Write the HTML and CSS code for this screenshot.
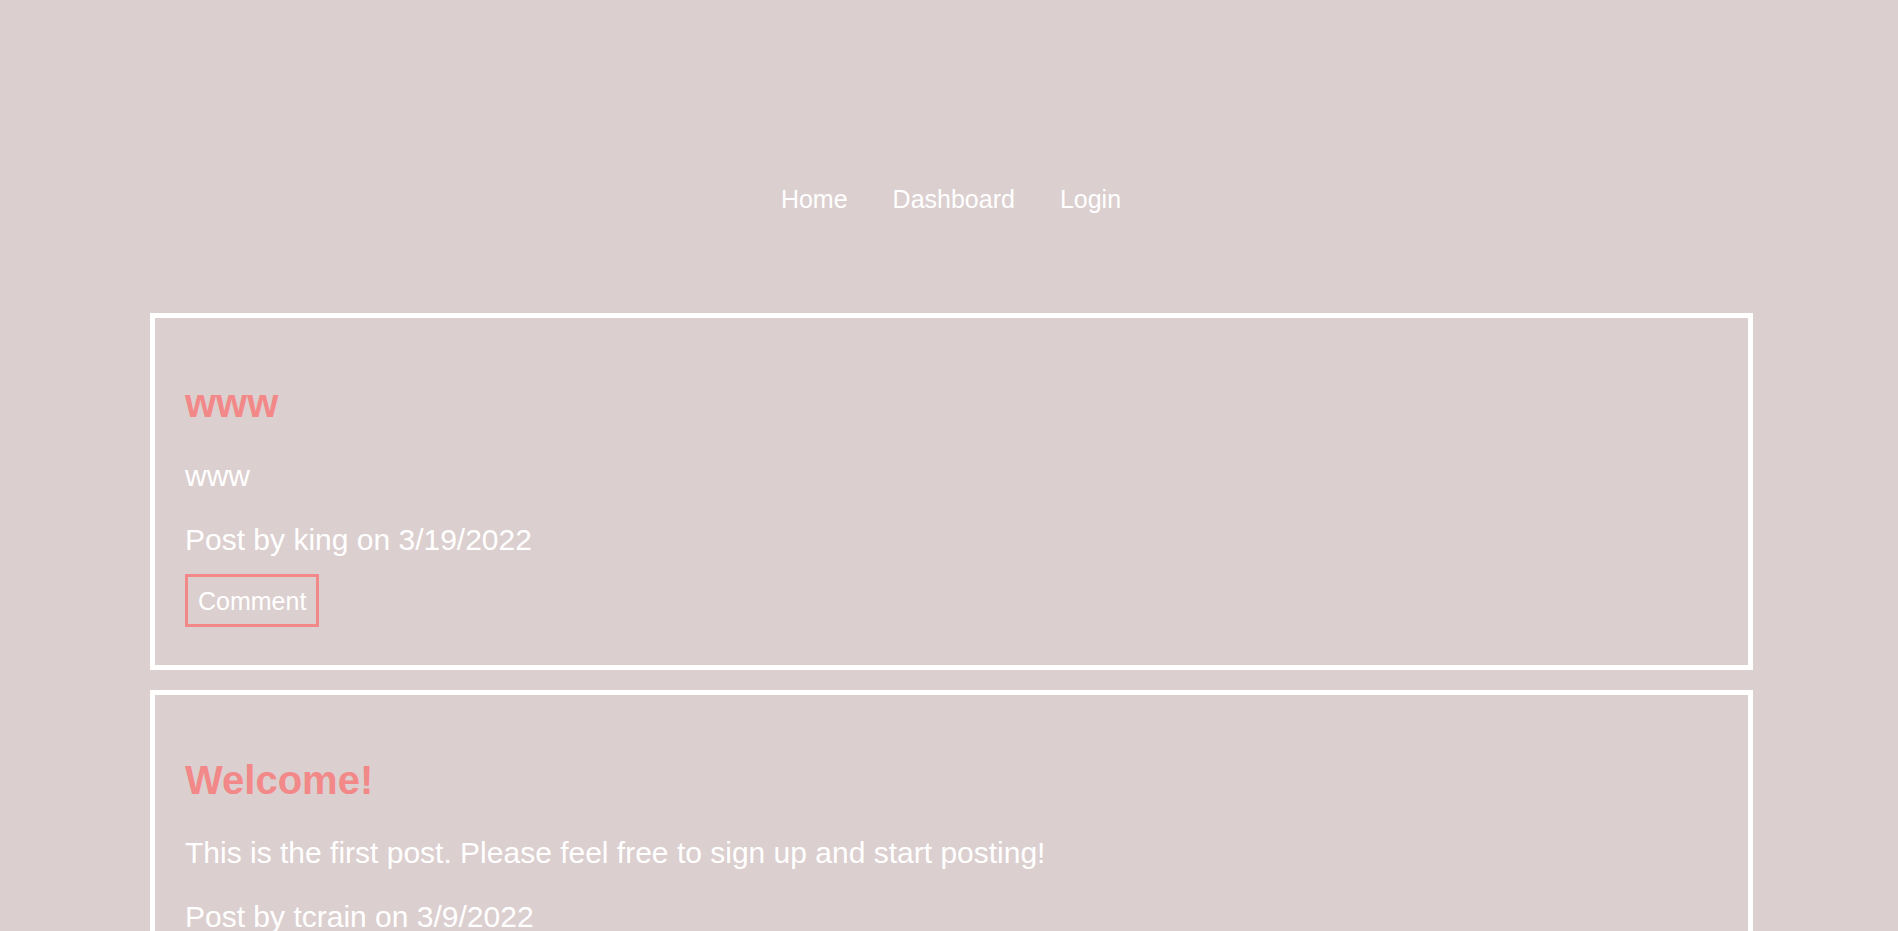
FILE: index.html
```html
<!DOCTYPE html>
<html lang="en">
<head>
<meta charset="utf-8">
<title>Tech Blog</title>
<link rel="stylesheet" href="styles.css">
</head>
<body>
<header class="site-header">
  <nav class="nav">
    <a class="nav-link" href="#">Home</a>
    <a class="nav-link" href="#">Dashboard</a>
    <a class="nav-link" href="#">Login</a>
  </nav>
</header>
<main class="posts">
  <article class="post">
    <h2 class="post-title">www</h2>
    <p class="post-body">www</p>
    <p class="post-meta">Post by king on 3/19/2022</p>
    <button class="comment-btn" type="button">Comment</button>
  </article>
  <article class="post">
    <h2 class="post-title">Welcome!</h2>
    <p class="post-body">This is the first post. Please feel free to sign up and start posting!</p>
    <p class="post-meta">Post by tcrain on 3/9/2022</p>
    <button class="comment-btn" type="button">Comment</button>
  </article>
</main>
</body>
</html>
```

FILE: styles.css
```css
html, body {
  margin: 0;
  padding: 0;
}

body {
  background: #dccfcf;
  font-family: "Liberation Sans", Arial, sans-serif;
  color: #ffffff;
}

.site-header {
  padding: 185px 0 99px;
}

.nav {
  display: flex;
  justify-content: center;
  gap: 45px;
  padding-left: 4px;
  font-size: 25px;
  line-height: 28.75px;
}

.nav-link {
  color: #ffffff;
  text-decoration: none;
}

.posts {
  margin: 0 145px 0 150px;
}

.post {
  border: 5px solid #ffffff;
  padding: 29px 30px 38px;
  margin-bottom: 20px;
}

.post-title {
  color: #f28888;
  font-size: 40px;
  font-weight: bold;
  margin: 33px 0;
  line-height: 46px;
}

.post-body {
  font-size: 30px;
  line-height: 34.5px;
  margin: 0;
}

.post-meta {
  font-size: 30px;
  line-height: 34.5px;
  margin: 30px 0 16px;
}

.comment-btn {
  display: block;
  background: transparent;
  border: 3px solid #f28888;
  color: #ffffff;
  font-family: "Liberation Sans", Arial, sans-serif;
  font-size: 25px;
  line-height: 28.75px;
  padding: 10px 10px 8px;
  margin: 0;
  cursor: pointer;
}
```
